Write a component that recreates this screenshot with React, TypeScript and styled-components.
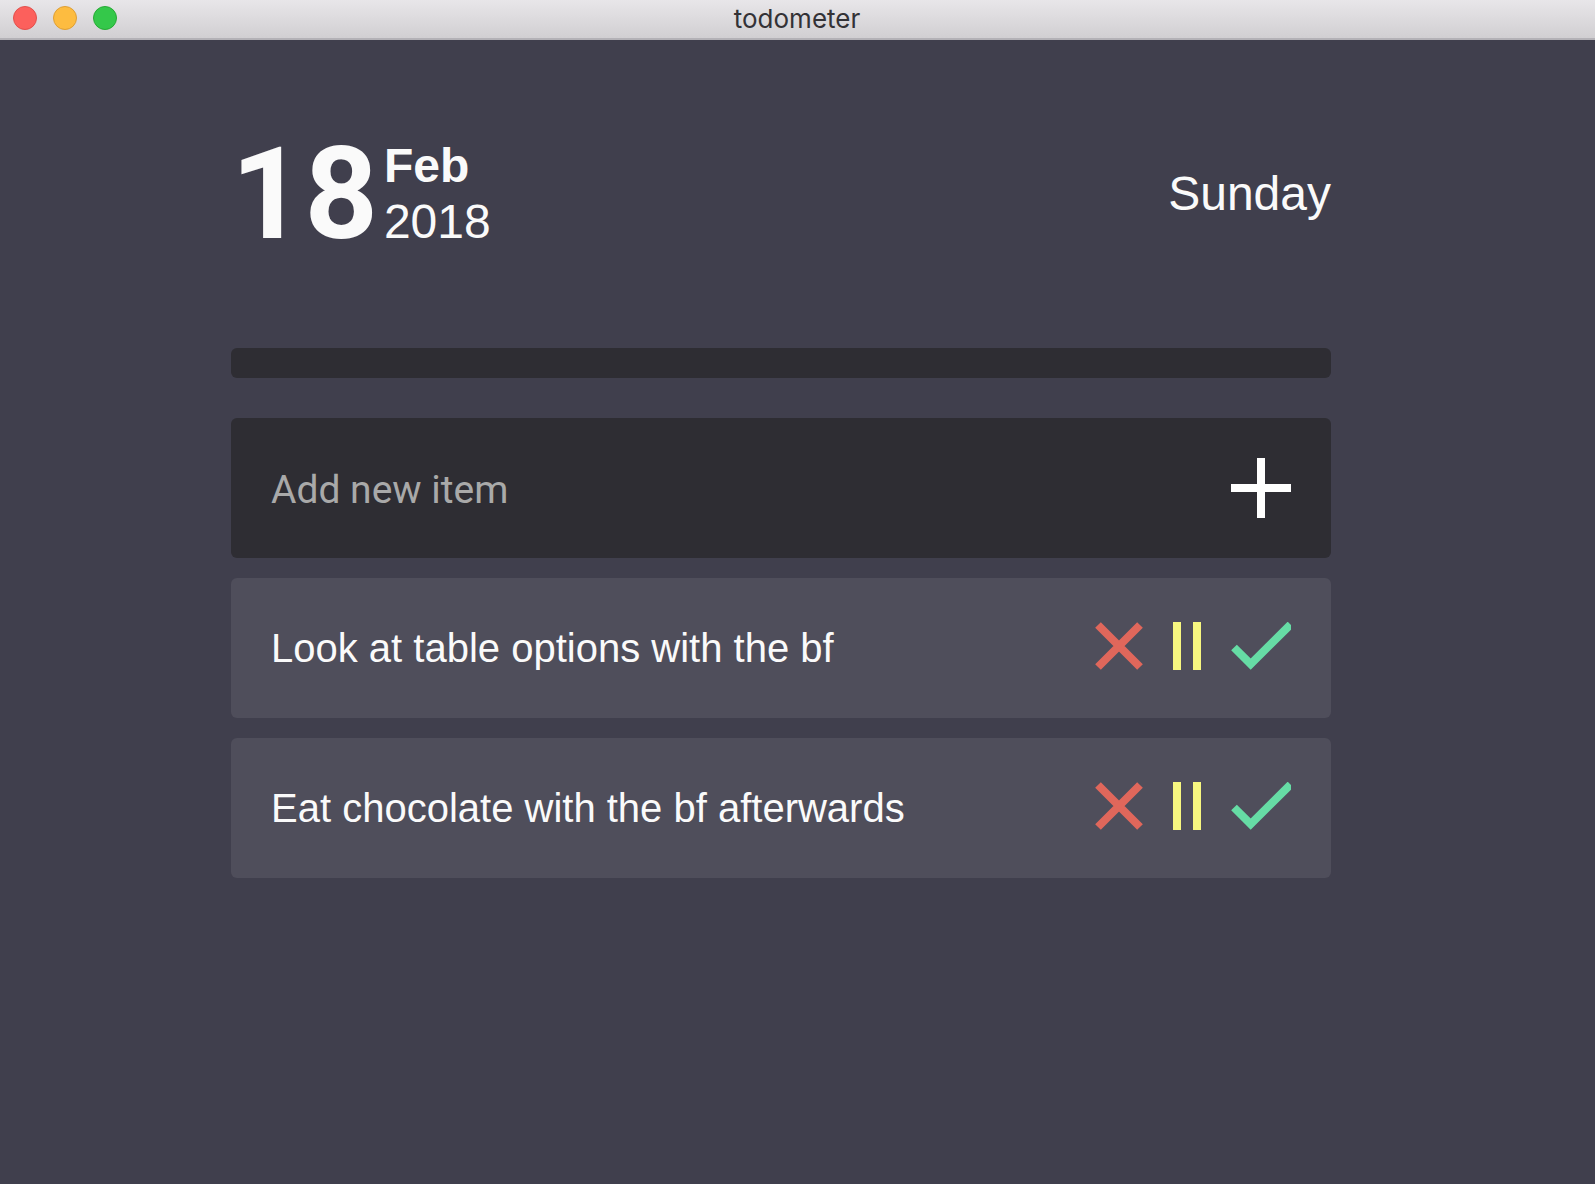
import React, { useState } from "react";
import styled, { createGlobalStyle } from "styled-components";

const GlobalStyle = createGlobalStyle`
  *, *::before, *::after { box-sizing: border-box; }
  body {
    margin: 0;
    background: #403f4d;
    color: #fafafa;
    font-family: "Liberation Sans", Arial, sans-serif;
  }
`;

const Window = styled.div`
  display: flex;
  flex-direction: column;
  min-height: 100vh;
`;

const TitleBar = styled.header`
  display: grid;
  grid-template-columns: 1fr auto 1fr;
  align-items: start;
  height: 40px;
  padding: 6px 14px 0 13px;
  background: linear-gradient(#e8e6e9, #d1cfd2);
  border-bottom: 2px solid #b3b1b6;
`;

const Lights = styled.div`
  display: flex;
  gap: 16px;
`;

const Light = styled.button<{ $fill: string; $edge: string }>`
  width: 24px;
  height: 24px;
  padding: 0;
  border: 1px solid ${(p) => p.$edge};
  border-radius: 50%;
  background: ${(p) => p.$fill};
`;

const Title = styled.h1`
  margin: 0;
  font: 400 26px/26px Inter, sans-serif;
  color: #333236;
`;

const Page = styled.div`
  padding-right: 33px;
`;

const Column = styled.main`
  display: flex;
  flex-direction: column;
  max-width: 1100px;
  margin: 0 auto;
  padding: 90px 0 40px;
`;

const DateHeader = styled.div`
  display: flex;
  align-items: center;
  justify-content: space-between;
  height: 128px;
  margin-bottom: 90px;
  font-size: 48px;
  line-height: 56px;
`;

const Today = styled.div`
  display: flex;
  align-items: center;
  gap: 6px;
`;

const Day = styled.span`
  font: 700 128px/128px Roboto, sans-serif;
`;

const MonthYear = styled.div`
  display: flex;
  flex-direction: column;
`;

const Month = styled.strong`
  font-weight: 700;
`;

const Progress = styled.div`
  height: 30px;
  margin-bottom: 40px;
  border-radius: 6px;
  background: #2e2d33;
`;

const Rows = styled.ul`
  display: flex;
  flex-direction: column;
  gap: 20px;
  margin: 20px 0 0;
  padding: 0;
  list-style: none;
`;

const AddForm = styled.form`
  display: flex;
  align-items: center;
  height: 140px;
  padding: 0 40px;
  border-radius: 6px;
  background: #2e2d33;
`;

const AddInput = styled.input`
  flex: 1;
  min-width: 0;
  height: 60px;
  padding: 4px 0 0;
  border: 0;
  outline: 0;
  background: none;
  color: #fafafa;
  font: 400 39px/48px Roboto, sans-serif;
  &::placeholder {
    color: #a9a9a9;
    opacity: 1;
  }
`;

const Item = styled.li`
  display: flex;
  align-items: center;
  justify-content: space-between;
  height: 140px;
  padding: 0 40px;
  border-radius: 6px;
  background: #4f4e5b;
  font-size: 40px;
  line-height: 48px;
`;

const Actions = styled.div`
  display: flex;
  gap: 30px;
  padding-bottom: 4px;
`;

const IconButton = styled.button`
  display: block;
  padding: 0;
  border: 0;
  background: none;
  cursor: pointer;
  svg {
    display: block;
  }
`;

const Cross = () => (
  <svg width="48" height="48" viewBox="0 0 48 48" stroke="#e0675b" strokeWidth="8">
    <path d="M3 3 45 45M45 3 3 45" />
  </svg>
);

const Pause = () => (
  <svg width="28" height="48" viewBox="0 0 28 48" fill="#f7f780">
    <path d="M0 0h8v48H0zM20 0h8v48h-8z" />
  </svg>
);

const Check = () => (
  <svg width="60" height="48" viewBox="0 0 60 48" fill="none" stroke="#66dca5" strokeWidth="8">
    <path d="M3 25.5 19.7 42.2 59.5 2.5" />
  </svg>
);

const Plus = () => (
  <svg width="60" height="60" viewBox="0 0 60 60" fill="#fff">
    <path d="M26 0h8v26h26v8H34v26h-8V34H0v-8h26z" />
  </svg>
);

const initialItems = ["Look at table options with the bf", "Eat chocolate with the bf afterwards"];

export default function App() {
  const [items, setItems] = useState(initialItems);
  const [draft, setDraft] = useState("");

  const remove = (text: string) => setItems(items.filter((i) => i !== text));
  const add = (e: React.FormEvent) => {
    e.preventDefault();
    if (draft.trim()) setItems([draft.trim(), ...items]);
    setDraft("");
  };

  return (
    <Window>
      <GlobalStyle />
      <TitleBar>
        <Lights>
          <Light aria-label="Close" $fill="#fc605c" $edge="#e2504c" />
          <Light aria-label="Minimize" $fill="#fdbc40" $edge="#de9f35" />
          <Light aria-label="Zoom" $fill="#34c84a" $edge="#27aa35" />
        </Lights>
        <Title>todometer</Title>
      </TitleBar>
      <Page>
        <Column>
          <DateHeader>
            <Today>
              <Day>18</Day>
              <MonthYear>
                <Month>Feb</Month>
                <span>2018</span>
              </MonthYear>
            </Today>
            <span>Sunday</span>
          </DateHeader>
          <Progress role="progressbar" aria-label="Done" aria-valuenow={0} />
          <AddForm onSubmit={add}>
            <AddInput
              aria-label="Add new item"
              placeholder="Add new item"
              value={draft}
              onChange={(e) => setDraft(e.target.value)}
            />
            <IconButton type="submit" aria-label="Add">
              <Plus />
            </IconButton>
          </AddForm>
          <Rows>
            {items.map((text) => (
              <Item key={text}>
                <span>{text}</span>
                <Actions>
                  <IconButton aria-label="Delete" onClick={() => remove(text)}>
                    <Cross />
                  </IconButton>
                  <IconButton aria-label="Pause">
                    <Pause />
                  </IconButton>
                  <IconButton aria-label="Complete" onClick={() => remove(text)}>
                    <Check />
                  </IconButton>
                </Actions>
              </Item>
            ))}
          </Rows>
        </Column>
      </Page>
    </Window>
  );
}
